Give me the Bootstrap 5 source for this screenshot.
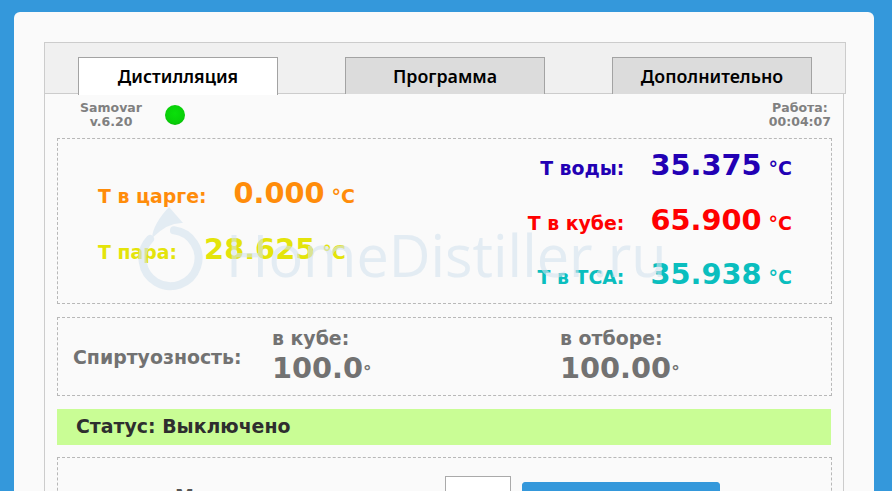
<!DOCTYPE html>
<html lang="ru">
<head>
<meta charset="utf-8">
<title>Samovar</title>
<link href="https://cdn.jsdelivr.net/npm/bootstrap@5.3.0/dist/css/bootstrap.min.css" rel="stylesheet">
<style>
html,body{height:491px;overflow:hidden}
body{background:#3498db;font-family:"DejaVu Sans",sans-serif;font-weight:700;padding:12px 18px 0 14px}
.sheet{background:#fafafa;border-radius:6px 6px 0 0;width:860px;height:600px;padding:30px 28px 0 30px;position:relative}
.strip{background:#f0f0f0;border:1px solid #ccc;height:52px;width:802px;padding:14px 0 0 33px;gap:67px}
.tabbtn{width:200px;height:37px;background:#dcdcdc;border:1px solid #a3a3a3;border-bottom:0;color:#000;font-family:"Noto Sans",sans-serif;font-weight:600;font-size:17.8px;line-height:37px;text-align:center}
.tabbtn.on{background:#fff;height:38px;position:relative}
.pane{width:800px;border:1px solid #ccc;border-top:0;padding:0 12px;height:600px}
.meta{height:44px;color:#808080;font-size:12.5px;line-height:14px;padding:7px 0 0 0}
.ver{width:108px;text-align:center}
.led{width:20px;height:20px;border-radius:50%;margin-top:4px;background:radial-gradient(circle at 50% 42%,#0ae00a 0,#08cf08 60%,#06a006 100%)}
.uptime{text-align:center}
.dots{border:1px dashed #b8b8b8;width:775px}
.temps{height:166px;padding:0 39px 0 40px}
.tline{display:flex;align-items:baseline;gap:27px}
.tlabel{font-size:18.9px}
.tval{font-size:28.8px;line-height:34px}
.tunit{font-size:19px;margin-left:7px}
.rlabel{width:200px;text-align:right}
.tleft{gap:21px}
.tright{gap:20px;padding-top:9px}
.tright .tline{gap:26px}
.c1{color:#ff8c0a}.c2{color:#e4e40a}.c3{color:#2200b4}.c4{color:#f00}.c5{color:#0abebe}
.spirit{height:79px;margin-top:13px;color:#727272;padding-left:15px}
.slab{font-size:18.9px;width:199px;flex:none;padding-top:2px;align-self:center}
.scol{width:288px;flex:none;align-self:flex-start;margin-top:8px}
.shead{font-size:18.9px;line-height:24px}
.sval{font-size:28.8px;line-height:30px;margin-top:3px}
.sdeg{font-size:17px;font-weight:700}
.status{width:774px;height:36px;margin-top:13px;background:#c9fd95;color:#2e2e2e;font-size:18.9px;line-height:35px;padding-left:19px}
.ctrl{height:90px;margin-top:12px;padding-top:18px;color:#555}
.mlabel{width:387px;font-size:19px;color:#555;padding:6px 0 0 117px}
.numbox{width:66px;height:40px;border:1px solid #aaa;background:#fff;border-radius:0;padding:0}
.gobtn{width:198px;height:40px;margin:6px 0 0 11px;background:#3498db;border:1px solid #3498db;border-radius:3px;color:#fff}
.wm{position:absolute;left:120px;top:190px;opacity:.6;pointer-events:none}
.wmtext{color:#d4e3ef;font-family:"Open Sans",sans-serif;font-weight:400;font-size:57.6px;line-height:60px;position:absolute;left:92px;top:23px;white-space:nowrap}
</style>
</head>
<body>
<div class="sheet">
  <div class="strip d-flex">
    <div class="tabbtn on">Дистилляция</div>
    <div class="tabbtn">Программа</div>
    <div class="tabbtn">Дополнительно</div>
  </div>
  <div class="pane">
    <div class="meta d-flex justify-content-between">
      <div class="d-flex">
        <div class="ver">Samovar<br>v.6.20</div>
        <div class="led"></div>
      </div>
      <div class="uptime">Работа:<br>00:04:07</div>
    </div>
    <div class="dots temps d-flex justify-content-between">
      <div class="tleft d-flex flex-column justify-content-center">
        <div class="tline c1"><span class="tlabel">Т в царге:</span><span><span class="tval">0.000</span><span class="tunit">°C</span></span></div>
        <div class="tline c2"><span class="tlabel">Т пара:</span><span><span class="tval">28.625</span><span class="tunit">°C</span></span></div>
      </div>
      <div class="tright d-flex flex-column">
        <div class="tline c3"><span class="tlabel rlabel">Т воды:</span><span><span class="tval">35.375</span><span class="tunit">°C</span></span></div>
        <div class="tline c4"><span class="tlabel rlabel">Т в кубе:</span><span><span class="tval">65.900</span><span class="tunit">°C</span></span></div>
        <div class="tline c5"><span class="tlabel rlabel">Т в ТСА:</span><span><span class="tval">35.938</span><span class="tunit">°C</span></span></div>
      </div>
    </div>
    <div class="dots spirit d-flex">
      <div class="slab">Спиртуозность:</div>
      <div class="scol"><div class="shead">в кубе:</div><div class="sval">100.0<span class="sdeg">°</span></div></div>
      <div class="scol"><div class="shead">в отборе:</div><div class="sval">100.00<span class="sdeg">°</span></div></div>
    </div>
    <div class="status">Статус: Выключено</div>
    <div class="dots ctrl d-flex align-items-start">
      <div class="mlabel">Мощность</div>
      <input class="numbox" type="text" aria-label="Мощность">
      <button class="gobtn" type="button"></button>
    </div>
  </div>
  <div class="wm">
    <svg width="90" height="100" viewBox="0 0 90 100" fill="none" aria-hidden="true">
      <path d="M40 28.3 A28 28 0 1 1 16 37" stroke="#d4e3ef" stroke-width="8" stroke-linecap="round"/>
      <path d="M35 5 L49 21 Q34 20 18 36 Q19 22 35 5 Z" fill="#d4e3ef"/>
    </svg>
    <span class="wmtext">HomeDistiller.ru</span>
  </div>
</div>
<script src="https://cdn.jsdelivr.net/npm/bootstrap@5.3.0/dist/js/bootstrap.bundle.min.js"></script>
</body>
</html>
